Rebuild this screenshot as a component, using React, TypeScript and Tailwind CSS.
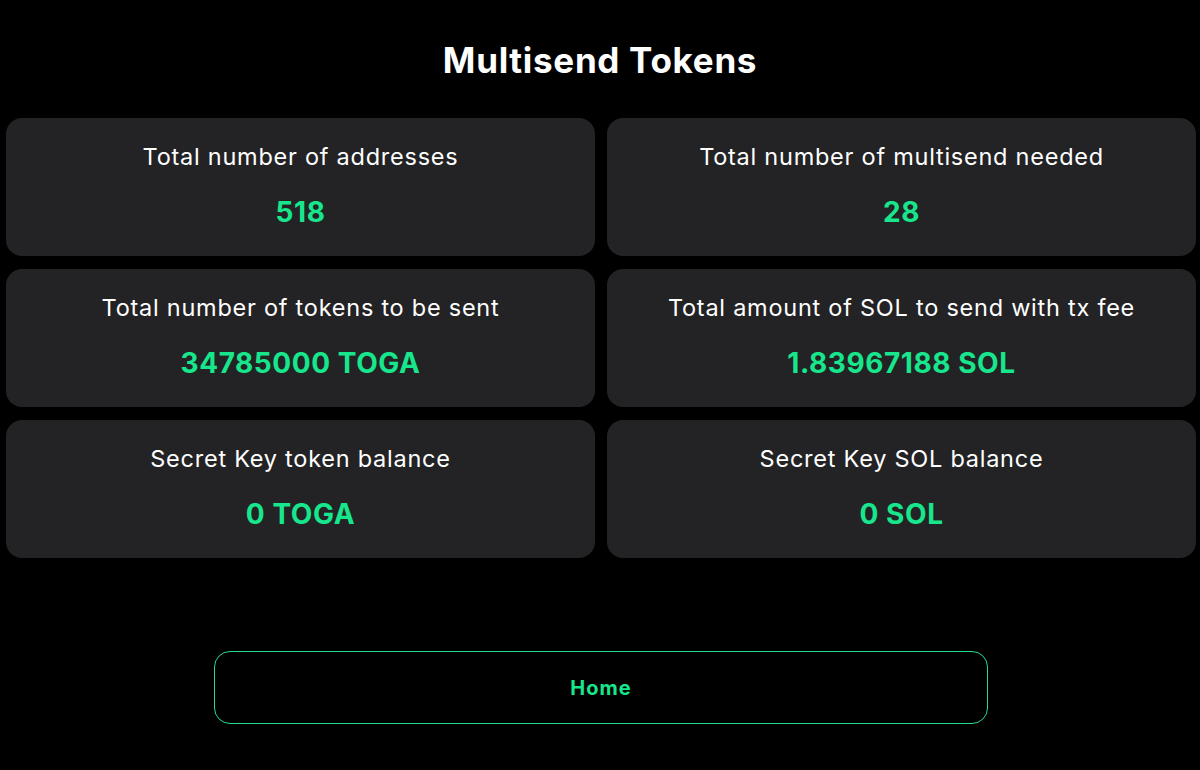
const STATS = [
  { label: 'Total number of addresses', value: '518' },
  { label: 'Total number of multisend needed', value: '28' },
  { label: 'Total number of tokens to be sent', value: '34785000 TOGA' },
  { label: 'Total amount of SOL to send with tx fee', value: '1.83967188 SOL' },
  { label: 'Secret Key token balance', value: '0 TOGA' },
  { label: 'Secret Key SOL balance', value: '0 SOL' },
]

function StatCard({ label, value }: { label: string; value: string }) {
  return (
    <div className="flex h-[138px] flex-col items-center rounded-2xl bg-[#232325] pt-[24px]">
      <p className="text-[23.5px] leading-[30px] tracking-[0.032em] text-white">{label}</p>
      <p className="mt-[24px] text-[28px] leading-[32px] font-bold tracking-[0.02em] text-[#17e68c]">{value}</p>
    </div>
  )
}

export default function App() {
  return (
    <div
      className="min-h-[770px] bg-black px-[6px]"
      style={{ fontFamily: 'Inter, "Open Sans", sans-serif' }}
    >
      <h1 className="pt-[38px] text-center text-[35px] leading-[44px] font-bold tracking-[0.02em] text-white">
        Multisend Tokens
      </h1>

      {/* stat grid */}
      <div className="mt-[36px] grid grid-cols-[589px_589px] gap-x-[12px] gap-y-[13px]">
        {STATS.map((s) => (
          <StatCard key={s.label} label={s.label} value={s.value} />
        ))}
      </div>

      <div className="mt-[93px] flex justify-center">
        <button className="ml-[2px] h-[73px] w-[774px] rounded-2xl border border-[#22dd8e] text-[20px] font-bold tracking-[0.05em] text-[#17e68c]">
          Home
        </button>
      </div>
    </div>
  )
}
